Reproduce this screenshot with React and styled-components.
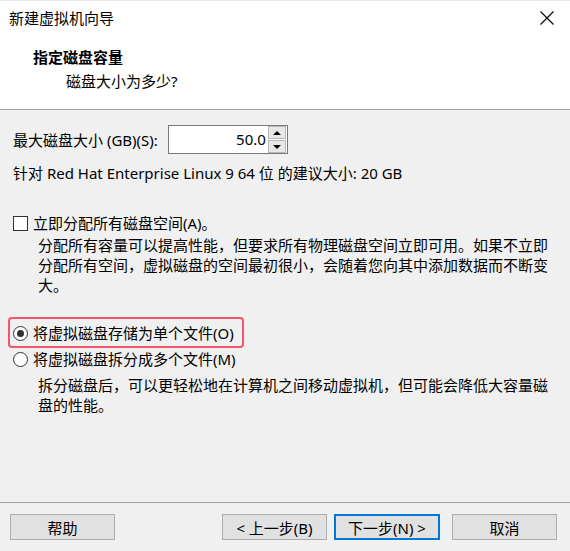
import React from "react";
import styled, { createGlobalStyle } from "styled-components";

const Global = createGlobalStyle`
  html, body { margin: 0; padding: 0; background: #f0f0f0; }
  body { font-family: "Noto Sans", "Noto Sans CJK SC", sans-serif; }
  * { box-sizing: border-box; }
`;

const FONT = `"Noto Sans", "Noto Sans CJK SC", sans-serif`;

const Window = styled.div`
  width: 570px;
  height: 551px;
  background: #f0f0f0;
  display: flex;
  flex-direction: column;
  font-family: ${FONT};
  font-size: 15px;
  color: #000;
  border-top: 1px solid #e6e6e6;
`;

const TitleBar = styled.div`
  height: 35px;
  background: #fff;
  display: flex;
  align-items: center;
  justify-content: space-between;
  padding: 0 16px 0 9px;
`;

const TitleText = styled.div`
  font-size: 15px;
  line-height: 20px;
  margin-top: -1px;
`;

const CloseBtn = styled.div`
  width: 14px;
  height: 14px;
  display: flex;
  margin-top: -2px;
`;

const Header = styled.div`
  height: 74px;
  background: #fff;
  border-bottom: 1px solid #a0a0a0;
  padding: 11px 0 0 33px;
`;

const HeaderTitle = styled.div`
  font-weight: bold;
  font-size: 15px;
  line-height: 20px;
`;

const HeaderSub = styled.div`
  font-size: 15px;
  line-height: 20px;
  margin-top: 4px;
  padding-left: 33px;
`;

const Body = styled.div`
  padding: 15px 12px 0 13px;
  display: flex;
  flex-direction: column;
`;

const SizeRow = styled.div`
  display: flex;
  align-items: center;
  gap: 10px;
  height: 29px;
`;

const Label = styled.span`
  line-height: 20px;
`;

const SpinBox = styled.div`
  display: flex;
  width: 120px;
  height: 29px;
  border: 1px solid #7a7a7a;
  background: #fff;
`;

const SpinInput = styled.div`
  flex: 1;
  text-align: right;
  padding-right: 2px;
  line-height: 27px;
`;

const SpinButtons = styled.div`
  width: 19px;
  display: flex;
  flex-direction: column;
  gap: 1px;
  padding: 0 1px 0 0;
`;

const SpinButton = styled.div`
  flex: 1;
  background: #e8e8e8;
  border: 1px solid #b8b8b8;
  display: flex;
  align-items: center;
  justify-content: center;
`;

const Arrow = styled.div`
  width: 0;
  height: 0;
  border-left: 4px solid transparent;
  border-right: 4px solid transparent;
  ${(p) =>
    p.$down
      ? "border-top: 4px solid #000;"
      : "border-bottom: 4px solid #000;"}
`;

const Text = styled.div`
  line-height: 20px;
  margin-top: ${(p) => p.$mt || 0}px;
`;

const OptionRow = styled.div`
  position: relative;
  display: flex;
  align-items: center;
  gap: 5px;
  height: 20px;
  margin-top: ${(p) => p.$mt || 0}px;
`;

const CheckBox = styled.div`
  width: 15px;
  height: 15px;
  border: 1px solid #333;
  background: #fff;
`;

const Radio = styled.div`
  width: 15px;
  height: 15px;
  border-radius: 50%;
  border: 1px solid #333;
  background: #fff;
  display: flex;
  align-items: center;
  justify-content: center;
  &::after {
    content: "";
    display: ${(p) => (p.$checked ? "block" : "none")};
    width: 7px;
    height: 7px;
    border-radius: 50%;
    background: #333;
  }
`;

const Highlight = styled.div`
  position: absolute;
  left: -5px;
  top: -6px;
  width: 236px;
  height: 31px;
  border: 2px solid #f1566f;
  border-radius: 4px;
  pointer-events: none;
`;

const Desc = styled.div`
  padding-left: 25px;
  width: 545px;
  line-height: 20px;
  margin-top: ${(p) => p.$mt || 0}px;
`;

const Footer = styled.div`
  margin-top: auto;
  border-top: 1px solid #a0a0a0;
  padding: 11px 13px 11px 10px;
  display: flex;
  align-items: center;
`;

const Button = styled.div`
  width: ${(p) => (p.$default ? 106 : 105)}px;
  height: 26px;
  background: #e1e1e1;
  border: ${(p) => (p.$default ? "2px solid #0078d7" : "1px solid #adadad")};
  display: flex;
  align-items: center;
  justify-content: center;
  font-size: 15px;
  margin-left: ${(p) => p.$ml || 0}px;
`;

export default function App() {
  return (
    <>
      <Global />
      <Window>
        <TitleBar>
          <TitleText>新建虚拟机向导</TitleText>
          <CloseBtn>
            <svg width="14" height="14" viewBox="0 0 14 14">
              <path d="M0.5 0.5 L13.5 13.5 M13.5 0.5 L0.5 13.5" stroke="#000" strokeWidth="1.1" fill="none" />
            </svg>
          </CloseBtn>
        </TitleBar>
        <Header>
          <HeaderTitle>指定磁盘容量</HeaderTitle>
          <HeaderSub>磁盘大小为多少?</HeaderSub>
        </Header>
        <Body>
          <SizeRow>
            <Label>最大磁盘大小 (GB)(S):</Label>
            <SpinBox>
              <SpinInput>50.0</SpinInput>
              <SpinButtons>
                <SpinButton><Arrow /></SpinButton>
                <SpinButton><Arrow $down /></SpinButton>
              </SpinButtons>
            </SpinBox>
          </SizeRow>
          <Text $mt={9}>针对 Red Hat Enterprise Linux 9 64 位 的建议大小: 20 GB</Text>
          <OptionRow $mt={30}>
            <CheckBox />
            <Label>立即分配所有磁盘空间(A)。</Label>
          </OptionRow>
          <Desc $mt={2}>
            分配所有容量可以提高性能，但要求所有物理磁盘空间立即可用。如果不立即分配所有空间，虚拟磁盘的空间最初很小，会随着您向其中添加数据而不断变大。
          </Desc>
          <OptionRow $mt={28}>
            <Radio $checked />
            <Label>将虚拟磁盘存储为单个文件(O)</Label>
            <Highlight />
          </OptionRow>
          <OptionRow $mt={6}>
            <Radio />
            <Label>将虚拟磁盘拆分成多个文件(M)</Label>
          </OptionRow>
          <Desc $mt={6}>
            拆分磁盘后，可以更轻松地在计算机之间移动虚拟机，但可能会降低大容量磁盘的性能。
          </Desc>
        </Body>
        <Footer>
          <Button>帮助</Button>
          <Button $ml={107}>&lt; 上一步(B)</Button>
          <Button $ml={7} $default>下一步(N) &gt;</Button>
          <Button $ml={12}>取消</Button>
        </Footer>
      </Window>
    </>
  );
}
